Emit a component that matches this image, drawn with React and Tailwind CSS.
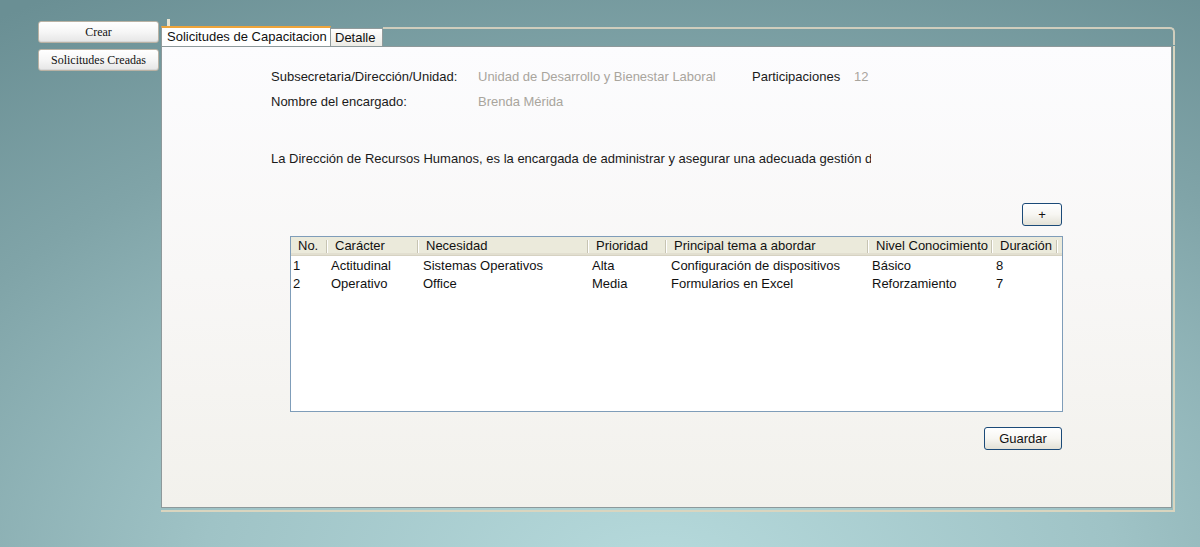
import React from "react";

const cols = [
  { label: "No.", w: "w-[37px]", cell: "pl-[2px]" },
  { label: "Carácter", w: "w-[91px]", cell: "pl-[3px]" },
  { label: "Necesidad", w: "w-[170px]", cell: "pl-[4px]" },
  { label: "Prioridad", w: "w-[78px]", cell: "pl-[3px]" },
  { label: "Principal tema a abordar", w: "w-[202px]", cell: "pl-[4px]" },
  { label: "Nivel Conocimiento", w: "w-[124px]", cell: "pl-[3px]" },
  { label: "Duración", w: "w-[65px]", cell: "pl-[3px]" },
];

const rows = [
  ["1", "Actitudinal", "Sistemas Operativos", "Alta", "Configuración de dispositivos", "Básico", "8"],
  ["2", "Operativo", "Office", "Media", "Formularios en Excel", "Reforzamiento", "7"],
];

function SideButton({ children }) {
  return (
    <button className="h-[22px] w-[121px] rounded-[3px] border border-[#b9b2a4] bg-gradient-to-b from-white via-[#f6f6f6] to-[#e6e6e6] text-[12px] leading-none text-[#111] font-['Liberation_Serif','Times_New_Roman',serif] shadow-[inset_0_-1px_0_#d8d8d8]">
      {children}
    </button>
  );
}

function XpButton({ children, className }) {
  return (
    <button
      className={
        "h-[23px] rounded-[3px] border border-[#1b4a78] bg-gradient-to-b from-white via-[#f7f6f2] to-[#e3e1d6] text-[13px] leading-none text-[#111] " +
        className
      }
    >
      {children}
    </button>
  );
}

export default function App() {
  return (
    <div className="min-h-[547px] w-full overflow-hidden bg-[radial-gradient(ellipse_95%_125%_at_55%_105%,#b6dadc_0%,#9fc3c6_40%,#80a4a8_72%,#6a8f94_100%)] font-['Liberation_Sans',Arial,sans-serif]">
      <div className="flex items-start pl-[38px] pt-[21px]">
        {/* left menu */}
        <div className="flex w-[121px] flex-col gap-[6px]">
          <SideButton>Crear</SideButton>
          <SideButton>Solicitudes Creadas</SideButton>
        </div>

        {/* tab control */}
        <div className="relative ml-[2px] mt-[5px] w-[1014px]">
          <div className="absolute -top-[7px] left-[6px] h-[7px] w-[3px] bg-[#e9e5d3]" />

          {/* tab strip */}
          <div className="flex h-[20px] items-end">
            <div className="h-[20px] w-[170px] border-l border-r border-[#919b9c] border-t-2 border-t-[#eea43a] bg-white pl-[5px] text-[13px] leading-[17px] text-[#111]">
              Solicitudes de Capacitacion
            </div>
            <div className="h-[18px] w-[52px] border-r border-t border-[#919b9c] bg-gradient-to-b from-white to-[#ecebe5] pl-[4px] text-[13px] leading-[18px] text-[#111]">
              Detalle
            </div>
            <div className="mb-[1px] h-[18px] flex-1 rounded-tr-[5px] border-r-2 border-t-2 border-[#cfcdbd]" />
          </div>

          {/* page frame */}
          <div className="border-b-2 border-r-2 border-[#d9d5bf] pb-[2px] pr-[1px]">
            <div className="h-[462px] border border-[#8d999b] bg-gradient-to-b from-[#fcfcfe] via-[#f8f7f6] to-[#f2f1ec] pl-[109px] pt-[17px] text-[#1a1a1a]">
              <div className="flex h-[25px] items-center text-[13px]">
                <span className="w-[207px]">Subsecretaria/Dirección/Unidad:</span>
                <span className="w-[274px] text-[#a9a59d]">Unidad de Desarrollo y Bienestar Laboral</span>
                <span className="w-[102px]">Participaciones</span>
                <span className="text-[#a9a59d]">12</span>
              </div>
              <div className="flex h-[25px] items-center text-[13px]">
                <span className="w-[207px]">Nombre del encargado:</span>
                <span className="text-[#a9a59d]">Brenda Mérida</span>
              </div>

              <div className="mt-[35px] h-[20px] w-[600px] overflow-hidden whitespace-nowrap text-[13px] leading-[20px]">
                La Dirección de Recursos Humanos, es la encargada de administrar y asegurar una adecuada gestión del talento humano en la institución
              </div>

              <div className="ml-[19px] w-[773px]">
                <div className="mt-[34px] flex justify-end pr-[1px]">
                  <XpButton className="w-[40px]">+</XpButton>
                </div>

                {/* list view */}
                <div className="mt-[10px] h-[176px] border border-[#7f9db9] bg-white text-[13px] text-[#111]">
                  <div className="flex h-[19px] border-b border-[#d6d2c2] bg-[#ebeadb] shadow-[inset_0_-2px_0_#e2dfd0]">
                    {cols.map((c) => (
                      <div key={c.label} className={"flex items-center " + c.w}>
                        <span className="flex-1 truncate pl-[7px] leading-[18px]">{c.label}</span>
                        <span className="h-[13px] w-[2px] border-l border-r border-l-[#c7c4b3] border-r-white" />
                      </div>
                    ))}
                  </div>
                  <div className="pt-[1px]">
                    {rows.map((r) => (
                      <div key={r[0]} className="flex h-[18px]">
                        {r.map((v, i) => (
                          <div key={i} className={"truncate leading-[18px] " + cols[i].w + " " + cols[i].cell}>
                            {v}
                          </div>
                        ))}
                      </div>
                    ))}
                  </div>
                </div>

                <div className="mt-[15px] flex justify-end pr-[1px]">
                  <XpButton className="w-[78px]">Guardar</XpButton>
                </div>
              </div>
            </div>
          </div>
        </div>
      </div>
    </div>
  );
}
